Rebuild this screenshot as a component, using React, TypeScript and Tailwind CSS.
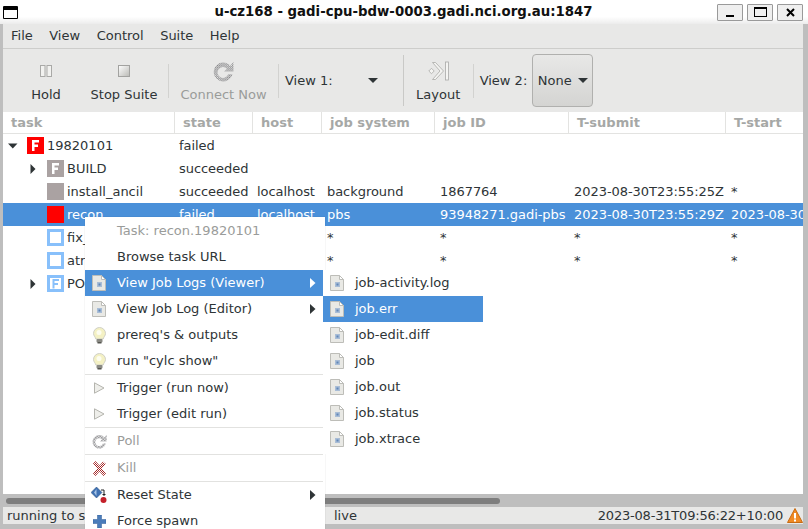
import React from "react";

const cols = "grid grid-cols-[171px_78px_69px_113px_134px_157px_78px]";

function FBox({ color, text = "#fff", letter = true }: { color: string; text?: string; letter?: boolean }) {
  return (
    <svg width="17" height="17" viewBox="0 0 17 17" className="shrink-0">
      <rect width="17" height="17" fill={color} />
      {letter && <path d="M5 3h7v2.500H7.500v2H11V10H7.500v4H5z" fill={text} />}
    </svg>
  );
}

function HollowBox({ letter = false }: { letter?: boolean }) {
  return (
    <svg width="17" height="17" viewBox="0 0 17 17" className="shrink-0">
      <rect x="1.500" y="1.500" width="14" height="14" fill="#fff" stroke="#88c0fb" strokeWidth="3" />
      {letter && <path d="M5.500 4h6.500v2H7.500v2H11v2H7.500v3.500h-2z" fill="#88c0fb" />}
    </svg>
  );
}

function Expander({ open = false }: { open?: boolean }) {
  return open ? (
    <svg width="10" height="10" viewBox="0 0 10 10" className="shrink-0">
      <path d="M0 2.500h9.500L4.800 7.500z" fill="#2e3436" />
    </svg>
  ) : (
    <svg width="10" height="10" viewBox="0 0 10 10" className="shrink-0">
      <path d="M2.500 0v10L7.500 5z" fill="#2e3436" />
    </svg>
  );
}

function DocIcon() {
  return (
    <svg width="14" height="16" viewBox="0 0 14 16" className="shrink-0">
      <path d="M.5.5h9l4 4v11H.5z" fill="#e9e9e5" stroke="#bdbdb8" />
      <path d="M9.500.5v4h4z" fill="#fff" stroke="#bdbdb8" />
      <rect x="5" y="7" width="5" height="5" fill="#a9bdd6" />
      <rect x="6.500" y="8.500" width="2" height="2" fill="#5f86b8" />
    </svg>
  );
}

function Bulb() {
  return (
    <svg width="13" height="17" viewBox="0 0 13 17" className="shrink-0">
      <path d="M6.500.5a6 6 0 0 0-6 6c0 2.200 1.800 3.200 2.300 5.500h7.400c.5-2.300 2.300-3.300 2.300-5.500a6 6 0 0 0-6-6z" fill="#f4f1c4" stroke="#cfcfc6" />
      <circle cx="6" cy="5.500" r="2.500" fill="#fdfdf0" />
      <rect x="3.500" y="12" width="6" height="3.500" rx="1" fill="#8a8a84" />
      <rect x="4.500" y="15" width="4" height="1.500" fill="#55554f" />
    </svg>
  );
}

function TriggerIcon() {
  return (
    <svg width="11" height="12" viewBox="0 0 11 12" className="shrink-0">
      <path d="M.5.800 10 6 .5 11.200z" fill="#eeeeea" stroke="#b4b4ae" />
    </svg>
  );
}

function Dither({ id, color }: { id: string; color: string }) {
  return (
    <pattern id={id} width="2" height="2" patternUnits="userSpaceOnUse">
      <rect width="2" height="2" fill="#fff" fillOpacity="0.4" />
      <rect width="1" height="1" fill={color} />
      <rect x="1" y="1" width="1" height="1" fill={color} />
    </pattern>
  );
}

function RefreshIcon({ size, id }: { size: number; id: string }) {
  return (
    <svg width={size} height={size} viewBox="0 0 20 20" className="shrink-0">
      <defs>
        <Dither id={id} color="#77777a" />
      </defs>
      <path d="M16.500 4.500A9 9 0 1 0 18.500 12.500h-4a5.200 5.200 0 1 1-1.200-5.200L10.500 10H19.500V1z" fill={`url(#${id})`} />
    </svg>
  );
}

function KillIcon() {
  return (
    <svg width="13" height="15" viewBox="0 0 13 15" className="shrink-0">
      <defs>
        <Dither id="killd" color="#a52a2a" />
      </defs>
      <path d="M2.500 0 6.500 4.500 10 .5l3 2.500L8.800 7.500 13 12.500 10.500 15 6.500 10.500 2.500 15 0 12.500 4.200 7.500 0 2.500z" fill="url(#killd)" />
    </svg>
  );
}

function ResetIcon() {
  return (
    <svg width="16" height="16" viewBox="0 0 16 16" className="shrink-0">
      <path d="M5.500 0 11 5.500 5.500 11 0 5.500z" fill="#3f71b3" stroke="#24497a" strokeWidth=".5" />
      <path d="M3 5.500 5.500 2v7z" fill="#a6c3e6" />
      <path d="M10 3h3v4.500" fill="none" stroke="#222" />
      <path d="M11 7h4l-2 2z" fill="#222" />
      <circle cx="12.500" cy="13" r="3" fill="#c4202a" />
    </svg>
  );
}

function PlusIcon() {
  return (
    <svg width="13" height="13" viewBox="0 0 13 13" className="shrink-0">
      <path d="M4.500 0h4v4.500H13v4H8.500V13h-4V8.500H0v-4h4.500z" fill="#4b7cba" stroke="#2f5c98" strokeWidth=".5" />
    </svg>
  );
}

function Arrow({ color }: { color: string }) {
  return (
    <svg width="6" height="10" viewBox="0 0 6 10" className="shrink-0">
      <path d="M0 0v10l5.500-5z" fill={color} />
    </svg>
  );
}

function Sep() {
  return <div className="h-px bg-[#e2e2e0]" />;
}

function MenuItem({
  icon,
  label,
  active,
  disabled,
  arrow,
}: {
  icon?: React.ReactNode;
  label: string;
  active?: boolean;
  disabled?: boolean;
  arrow?: boolean;
}) {
  return (
    <div
      className={`flex items-center h-[26px] pr-[7px] ${active ? "bg-[#4a90d9] text-white" : disabled ? "text-[#9a9c9a]" : "text-[#2e3436]"}`}
    >
      <div className="w-[28px] mr-[4px] flex justify-center items-center shrink-0">{icon}</div>
      <span className="flex-1 whitespace-nowrap">{label}</span>
      {arrow && <Arrow color={active ? "#fff" : "#2e3436"} />}
    </div>
  );
}

function ToolButton({ icon, label, disabled, w }: { icon: React.ReactNode; label: string; disabled?: boolean; w: string }) {
  return (
    <div className={`flex flex-col items-center ${w} ${disabled ? "text-[#9a9c9a]" : "text-[#2e3436]"}`}>
      <div className="h-[26px] flex items-center justify-center">{icon}</div>
      <span className="mt-[3px] leading-[16px] whitespace-nowrap">{label}</span>
    </div>
  );
}

function ToolSep() {
  return <div className="w-px h-[34px] bg-[#d2d2d0] shrink-0" />;
}

function Row({
  selected,
  indent,
  expander,
  open,
  icon,
  name,
  cells,
}: {
  selected?: boolean;
  indent: number;
  expander?: boolean;
  open?: boolean;
  icon: React.ReactNode;
  name: string;
  cells: string[];
}) {
  return (
    <div className={`${cols} h-[23px] items-center ${selected ? "bg-[#4a90d9] text-white" : "text-[#2e3436]"}`}>
      <div className="flex items-center whitespace-nowrap overflow-hidden" style={{ paddingLeft: indent }}>
        <div className="w-[24px] flex justify-start pl-[5px] shrink-0">{expander && <Expander open={open} />}</div>
        {icon}
        <span className="ml-[3px]">{name}</span>
      </div>
      {cells.map((c, i) => (
        <div key={i} className={`${i < 2 ? "pl-[5px]" : "pl-[6px]"} whitespace-nowrap overflow-hidden tracking-[-0.05px]`}>
          {c}
        </div>
      ))}
    </div>
  );
}

export default function App() {
  const files = ["job-activity.log", "job.err", "job-edit.diff", "job", "job.out", "job.status", "job.xtrace"];
  const headers = ["task", "state", "host", "job system", "job ID", "T-submit", "T-start"];
  return (
    <div className="relative w-[808px] h-[529px] overflow-hidden flex flex-col bg-[#bebebe] text-[13px] font-['DejaVu_Sans',sans-serif] leading-[16px]">
      {/* window title bar */}
      <div className="h-[24px] shrink-0 bg-gradient-to-b from-white from-70% to-[#ececec] flex items-center relative">
        <div className="w-[15px] h-[13px] ml-[3px] border border-black border-t-[4px] bg-white rounded-[1px]" />
        <div className="flex-1 text-center font-bold text-[13.3px] text-[#111] pl-[72px]">u-cz168 - gadi-cpu-bdw-0003.gadi.nci.org.au:1847</div>
        <div className="flex gap-[4px] mr-[5px]">
          <div className="w-[26px] h-[17px] border border-[#9a9a9a] rounded-[1px] bg-[#efefef] flex items-end justify-center pb-[3px]">
            <div className="w-[8px] h-[2px] bg-black" />
          </div>
          <div className="w-[26px] h-[17px] border border-[#9a9a9a] rounded-[1px] bg-[#efefef] flex items-center justify-center">
            <div className="w-[13px] h-[10px] border border-black border-t-[2px]" />
          </div>
          <div className="w-[26px] h-[17px] border border-[#9a9a9a] rounded-[1px] bg-[#efefef] flex items-center justify-center">
            <svg width="9" height="9" viewBox="0 0 9 9">
              <path d="M1 1l7 7M8 1 1 8" stroke="#000" strokeWidth="2" />
            </svg>
          </div>
        </div>
      </div>

      <div className="flex-1 min-h-0 ml-[3px] mr-[5px] mb-[5px] flex flex-col bg-white">
        {/* menu bar */}
        <div className="h-[25px] shrink-0 bg-[#e8e8e7] border-b border-[#cdcdcb] flex items-center pl-[8px] gap-[16.500px] text-[#2e3436]">
          <span>File</span>
          <span>View</span>
          <span>Control</span>
          <span>Suite</span>
          <span>Help</span>
        </div>

        {/* toolbar */}
        <div className="h-[63px] shrink-0 bg-[#e8e8e7] flex items-center text-[#2e3436]">
          <ToolButton
            w="w-[86px]"
            label="Hold"
            icon={
              <svg width="12" height="12" viewBox="0 0 12 12">
                <rect x=".5" y=".5" width="4.500" height="11" fill="#f2f2f0" stroke="#a9a9a7" />
                <rect x="7" y=".5" width="4.500" height="11" fill="#f2f2f0" stroke="#a9a9a7" />
              </svg>
            }
          />
          <ToolButton
            w="w-[70px]"
            label="Stop Suite"
            icon={
              <svg width="12" height="12" viewBox="0 0 12 12">
                <defs>
                  <linearGradient id="st" x1="0" y1="0" x2="1" y2="1">
                    <stop offset="0" stopColor="#fff" />
                    <stop offset="1" stopColor="#b9b9b5" />
                  </linearGradient>
                </defs>
                <rect x=".5" y=".5" width="11" height="11" fill="url(#st)" stroke="#a2a2a0" />
              </svg>
            }
          />
          <div className="w-[9px] shrink-0" />
          <ToolSep />
          <ToolButton disabled w="w-[109px]" label="Connect Now" icon={<RefreshIcon size={21} id="cn" />} />
          <ToolSep />
          <span className="ml-[6px] whitespace-nowrap">View 1:</span>
          <svg width="10" height="5" viewBox="0 0 10 5" className="ml-[35px] shrink-0">
            <path d="M0 0h10L5 5z" fill="#2e3436" />
          </svg>
          <div className="w-[25px] shrink-0" />
          <div className="w-px h-[51px] bg-[#c9c9c7] shrink-0" />
          <ToolButton
            w="w-[69px]"
            label="Layout"
            icon={
              <svg width="21" height="20" viewBox="0 0 21 20">
                <path d="M.8 10 3.500 7.300 6.200 10 3.500 12.700z" fill="#f4f4f2" stroke="#a9a9a7" strokeWidth=".8" />
                <path d="M4.500 1.500h3L15.500 10 7.500 18.500h-3L12 10z" fill="#f4f4f2" stroke="#a9a9a7" strokeWidth=".8" />
                <rect x="17.500" y="1" width="3" height="18" fill="#f4f4f2" stroke="#a9a9a7" strokeWidth=".8" />
              </svg>
            }
          />
          <ToolSep />
          <span className="ml-[6px] whitespace-nowrap">View 2:</span>
          <div className="ml-[5px] w-[61px] h-[53px] shrink-0 rounded-[4px] border border-[#b0b0ae] bg-gradient-to-b from-[#e8e8e7] to-[#d4d4d2] flex items-center justify-center gap-[6px]">
            <span>None</span>
            <svg width="10" height="5" viewBox="0 0 10 5">
              <path d="M0 0h10L5 5z" fill="#2e3436" />
            </svg>
          </div>
        </div>

        {/* tree header */}
        <div className={`${cols} h-[22px] shrink-0 border-b border-[#e3e3e1] items-center font-bold text-[#a6a8a6]`}>
          {headers.map((h, i) => (
            <div key={h} className={`h-full flex items-center pl-[8px] ${i === 0 ? "" : "border-l border-[#e3e3e1]"}`}>
              {h}
            </div>
          ))}
        </div>

        {/* tree rows */}
        <div className="flex-1 min-h-0 overflow-hidden">
          <Row indent={0} expander open icon={<FBox color="#ff0000" />} name="19820101" cells={["failed"]} />
          <Row indent={20} expander icon={<FBox color="#aaa2a2" />} name="BUILD" cells={["succeeded"]} />
          <Row indent={20} icon={<FBox color="#aaa2a2" letter={false} />} name="install_ancil" cells={["succeeded", "localhost", "background", "1867764", "2023-08-30T23:55:25Z", "*"]} />
          <Row selected indent={20} icon={<FBox color="#ff0000" letter={false} />} name="recon" cells={["failed", "localhost", "pbs", "93948271.gadi-pbs", "2023-08-30T23:55:29Z", "2023-08-30"]} />
          <Row indent={20} icon={<HollowBox />} name="fix_" cells={["", "", "*", "*", "*", "*"]} />
          <Row indent={20} icon={<HollowBox />} name="atr" cells={["", "", "*", "*", "*", "*"]} />
          <Row indent={20} expander icon={<HollowBox letter />} name="PO" cells={[]} />
        </div>

        {/* scrollbar */}
        <div className="h-[13px] shrink-0 bg-[#bebebe] flex items-center">
          <div className="ml-[3px] w-[494px] h-[6px] rounded-full bg-[#7e7e7e]" />
        </div>

        {/* status bar */}
        <div className="h-[17px] shrink-0 bg-[#e8e8e7] flex items-center text-[#2e3436]">
          <span className="ml-[4px] w-[327px] whitespace-nowrap overflow-hidden">running to stop</span>
          <span>live</span>
          <span className="ml-auto whitespace-nowrap tracking-[-0.2px]">2023-08-31T09:56:22+10:00</span>
          <svg width="16" height="15" viewBox="0 0 16 15" className="ml-[4px] shrink-0">
            <path d="M8 .5 15.500 14.500H.5z" fill="#f08a24" stroke="#c76a12" />
            <rect x="7" y="5" width="2" height="5.500" fill="#fff" />
            <rect x="7" y="11.500" width="2" height="2" fill="#fff" />
          </svg>
        </div>
      </div>

      {/* context menu */}
      <div className="absolute left-[85px] top-[217px] w-[240px] bg-white pt-[1px] pr-[2px] shadow-[0_0_1px_rgba(0,0,0,0.2)]">
        <MenuItem disabled label="Task: recon.19820101" />
        <MenuItem label="Browse task URL" />
        <MenuItem active arrow icon={<DocIcon />} label="View Job Logs (Viewer)" />
        <MenuItem arrow icon={<DocIcon />} label="View Job Log (Editor)" />
        <MenuItem icon={<Bulb />} label="prereq's & outputs" />
        <MenuItem icon={<Bulb />} label={'run "cylc show"'} />
        <Sep />
        <MenuItem icon={<TriggerIcon />} label="Trigger (run now)" />
        <MenuItem icon={<TriggerIcon />} label="Trigger (edit run)" />
        <Sep />
        <MenuItem disabled icon={<RefreshIcon size={15} id="pl" />} label="Poll" />
        <Sep />
        <MenuItem disabled icon={<KillIcon />} label="Kill" />
        <Sep />
        <MenuItem arrow icon={<ResetIcon />} label="Reset State" />
        <MenuItem icon={<PlusIcon />} label="Force spawn" />
      </div>

      {/* submenu */}
      <div className="absolute left-[323px] top-[270px] w-[162px] bg-white pb-[2px] pr-[2px]">
        {files.map((f, i) => (
          <MenuItem key={f} active={i === 1} icon={<DocIcon />} label={f} />
        ))}
      </div>
    </div>
  );
}
